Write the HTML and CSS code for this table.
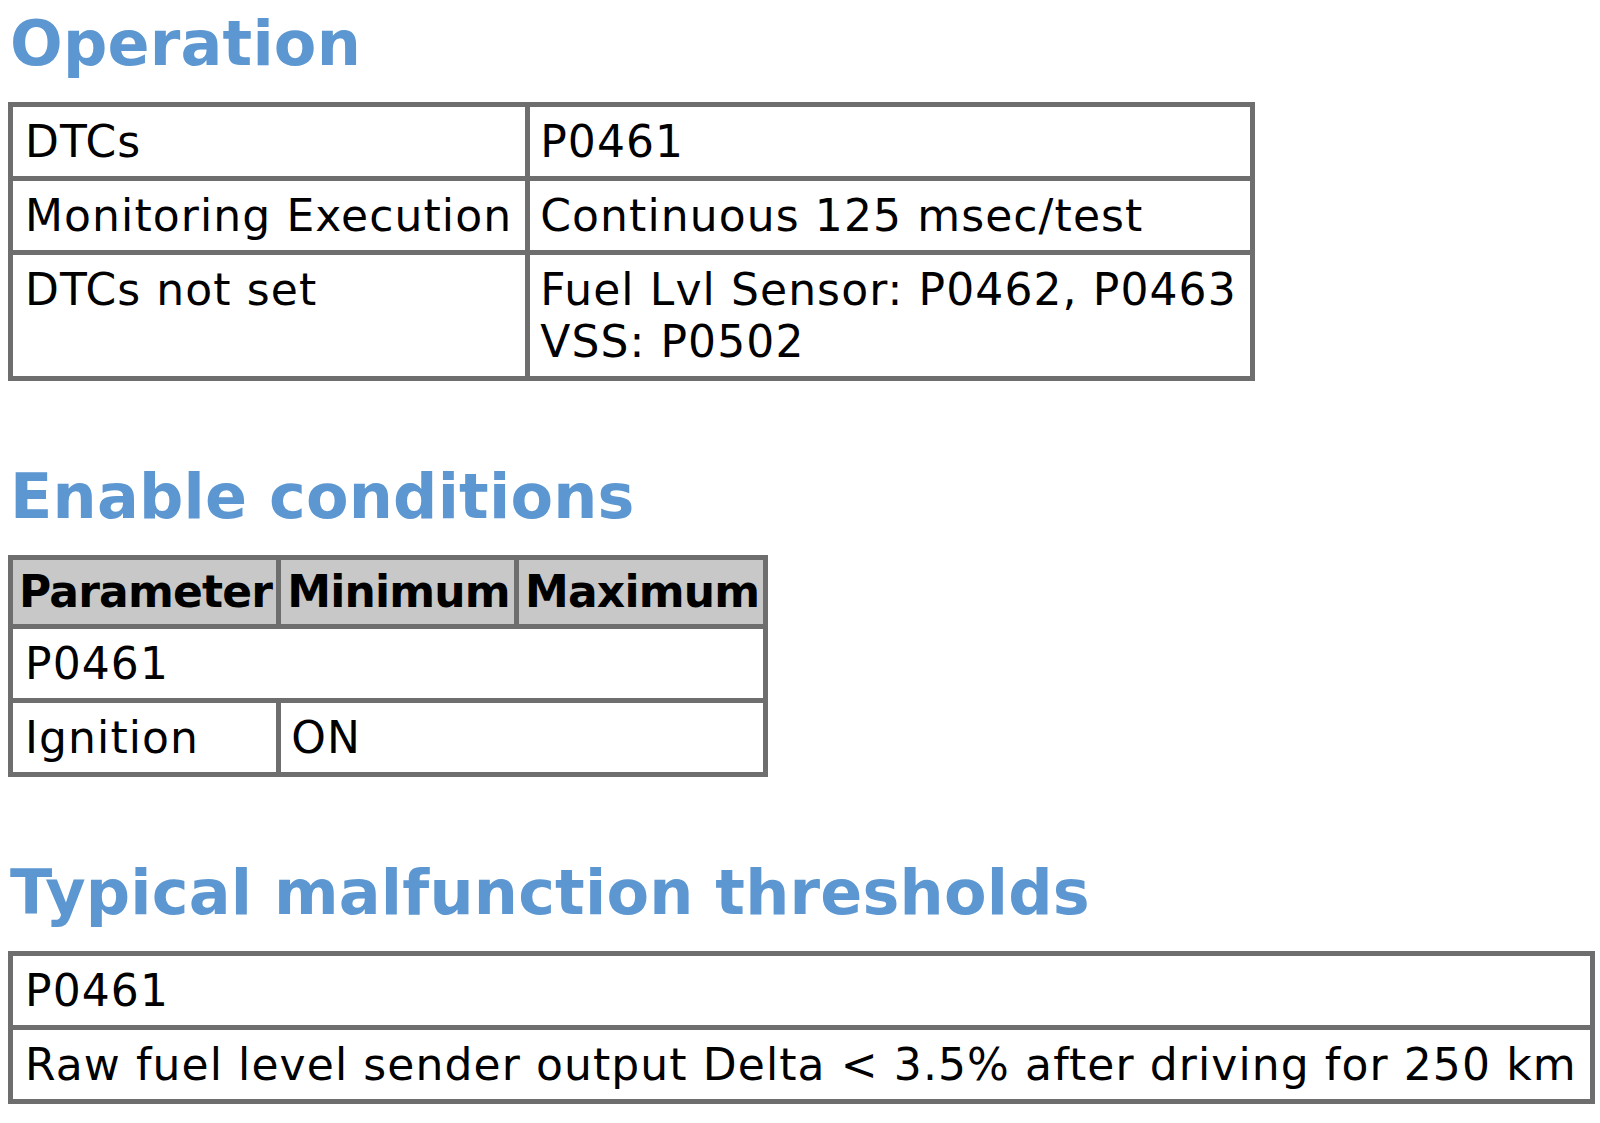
FILE: index.html
```html
<!DOCTYPE html>
<html>
<head>
<meta charset="utf-8">
<link rel="stylesheet" href="styles.css">
</head>
<body>
<h2 class="heading">Operation</h2>
<table class="grid">
  <tr><td>DTCs</td><td>P0461</td></tr>
  <tr><td>Monitoring Execution</td><td>Continuous 125 msec/test</td></tr>
  <tr><td>DTCs not set</td><td>Fuel Lvl Sensor: P0462, P0463<br>VSS: P0502</td></tr>
</table>
<h2 class="heading">Enable conditions</h2>
<table class="grid">
  <tr><th>Parameter</th><th>Minimum</th><th>Maximum</th></tr>
  <tr><td colspan="3">P0461</td></tr>
  <tr><td>Ignition</td><td colspan="2">ON</td></tr>
</table>
<h2 class="heading">Typical malfunction thresholds</h2>
<table class="grid last">
  <tr><td>P0461</td></tr>
  <tr><td>Raw fuel level sender output Delta &lt; 3.5% after driving for 250 km</td></tr>
</table>
</body>
</html>
```
FILE: styles.css
```css
html, body {
  background: #ffffff;
}
body {
  margin: 0;
  padding: 6px 8px 0;
  font-family: "DejaVu Sans", Verdana, sans-serif;
  color: #000000;
}
.heading {
  margin: 0 0 20px 2px;
  font-size: 62px;
  line-height: 76px;
  font-weight: bold;
  letter-spacing: 0.2px;
  color: #5c97d1;
}
.grid {
  border-collapse: collapse;
  border: 5px solid #6e6e6e;
  margin-bottom: 78px;
}
.grid.last {
  margin-bottom: 0;
}
.grid td, .grid th {
  border: 5px solid #6e6e6e;
  padding: 9px 13px 8px 12px;
  font-size: 44px;
  line-height: 52px;
  letter-spacing: 1.1px;
  text-align: left;
  vertical-align: top;
  white-space: nowrap;
}
.grid td + td {
  padding-left: 10px;
}
.grid th {
  background: #c8c8c8;
  font-weight: bold;
  letter-spacing: -0.8px;
  padding: 6px 4px 6px 6px;
}
```
